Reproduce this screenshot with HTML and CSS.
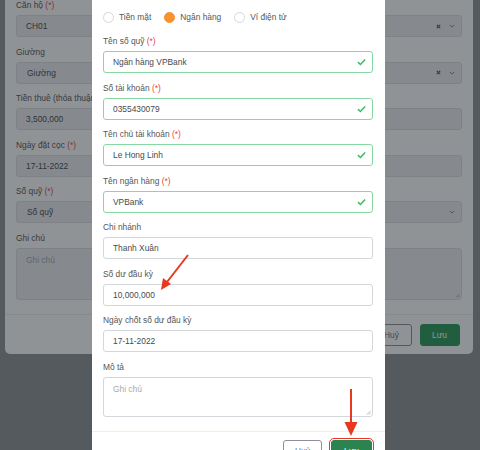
FILE: index.html
```html
<!DOCTYPE html>
<html lang="vi">
<head>
<meta charset="utf-8">
<title>Sổ quỹ</title>
<link rel="stylesheet" href="styles.css">
</head>
<body>
<div class="stage">
  <div class="modal modal-back">
    <div class="mbody">
      <div class="fg">
        <label class="lbl">Căn hộ <span class="req">(*)</span></label>
        <div class="ctl sel"><span class="val">CH01</span><span class="icons"><svg class="clr" viewBox="0 0 6 6"><path d="M1 1L5 5M5 1L1 5"/></svg><svg class="chev" viewBox="0 0 8 5"><path d="M1 1L4 4L7 1"/></svg></span></div>
      </div>
      <div class="fg">
        <label class="lbl">Giường</label>
        <div class="ctl sel"><span class="val ind">Giường</span><span class="icons"><svg class="clr" viewBox="0 0 6 6"><path d="M1 1L5 5M5 1L1 5"/></svg><svg class="chev" viewBox="0 0 8 5"><path d="M1 1L4 4L7 1"/></svg></span></div>
      </div>
      <div class="fg">
        <label class="lbl">Tiền thuê (thỏa thuận)</label>
        <div class="ctl">3,500,000</div>
      </div>
      <div class="fg">
        <label class="lbl">Ngày đặt cọc <span class="req">(*)</span></label>
        <div class="ctl">17-11-2022</div>
      </div>
      <div class="fg">
        <label class="lbl">Số quỹ <span class="req">(*)</span></label>
        <div class="ctl sel"><span class="val ind">Số quỹ</span><span class="icons"><svg class="chev" viewBox="0 0 8 5"><path d="M1 1L4 4L7 1"/></svg></span></div>
      </div>
      <div class="fg">
        <label class="lbl">Ghi chú</label>
        <div class="ctl area tall"><span class="ph">Ghi chú</span><svg class="grip" viewBox="0 0 6 6"><path d="M5.5 1L1 5.5M5.5 3.5L3.5 5.5"/></svg></div>
      </div>
    </div>
    <div class="mfoot">
      <button class="btn btn-out">Huỷ</button>
      <button class="btn btn-ok">Lưu</button>
    </div>
  </div>

  <div class="backdrop"></div>

  <div class="modal modal-front">
    <div class="mbody">
      <div class="radios">
        <span class="radio"><span class="dot"></span>Tiền mặt</span>
        <span class="radio"><span class="dot on"></span>Ngân hàng</span>
        <span class="radio"><span class="dot"></span>Ví điện tử</span>
      </div>
      <div class="fg">
        <label class="lbl">Tên số quỹ <span class="req">(*)</span></label>
        <div class="ctl ok">Ngân hàng VPBank<svg class="chk" viewBox="0 0 10 8"><path d="M1 4.2L3.8 6.8L9 1.2"/></svg></div>
      </div>
      <div class="fg">
        <label class="lbl">Số tài khoản <span class="req">(*)</span></label>
        <div class="ctl ok">0355430079<svg class="chk" viewBox="0 0 10 8"><path d="M1 4.2L3.8 6.8L9 1.2"/></svg></div>
      </div>
      <div class="fg">
        <label class="lbl">Tên chủ tài khoản <span class="req">(*)</span></label>
        <div class="ctl ok">Le Hong Linh<svg class="chk" viewBox="0 0 10 8"><path d="M1 4.2L3.8 6.8L9 1.2"/></svg></div>
      </div>
      <div class="fg">
        <label class="lbl">Tên ngân hàng <span class="req">(*)</span></label>
        <div class="ctl ok">VPBank<svg class="chk" viewBox="0 0 10 8"><path d="M1 4.2L3.8 6.8L9 1.2"/></svg></div>
      </div>
      <div class="fg">
        <label class="lbl">Chi nhánh</label>
        <div class="ctl">Thanh Xuân</div>
      </div>
      <div class="fg">
        <label class="lbl">Số dư đầu kỳ</label>
        <div class="ctl">10,000,000</div>
      </div>
      <div class="fg">
        <label class="lbl">Ngày chốt số dư đầu kỳ</label>
        <div class="ctl">17-11-2022</div>
      </div>
      <div class="fg">
        <label class="lbl">Mô tả</label>
        <div class="ctl area"><span class="ph">Ghi chú</span><svg class="grip" viewBox="0 0 6 6"><path d="M5.5 1L1 5.5M5.5 3.5L3.5 5.5"/></svg></div>
      </div>
    </div>
    <div class="mfoot">
      <button class="btn btn-out">Huỷ</button>
      <button class="btn btn-ok btn-mark">Lưu</button>
    </div>
  </div>

  <svg class="annot" viewBox="0 0 480 450" width="480" height="450">
    <line x1="188" y1="255" x2="167" y2="282"/>
    <polygon points="161,290 163,278 171,284"/>
    <line x1="351" y1="389" x2="351" y2="424"/>
    <polygon points="344.5,422 357.5,422 351,436"/>
  </svg>
</div>
</body>
</html>
```

FILE: styles.css
```css
* { box-sizing: border-box; }
html, body { margin: 0; padding: 0; }
body {
  background: #8f9295;
  font-family: "Liberation Sans", Arial, sans-serif;
  font-size: 8.4px;
  color: #495057;
}
.stage {
  position: relative;
  width: 480px;
  height: 450px;
  overflow: hidden;
}
.modal {
  background: #fff;
  border-radius: 5px;
}
.modal-back {
  margin: -12px 7px 0 5px;
}
.mbody {
  padding: 11px 11px 6px;
}
.fg {
  margin-bottom: 8.5px;
}
.lbl {
  display: block;
  line-height: 12px;
  margin-bottom: 4px;
  color: #555;
}
.req { color: #e8423a; }
.ctl {
  position: relative;
  height: 22px;
  border: 1px solid #d3d7db;
  border-radius: 3px;
  padding: 0 9px;
  display: flex;
  align-items: center;
  color: #464a4e;
  background: #fff;
}
.modal-back .ctl {
  background: #eceef0;
  border-color: #dcdfe2;
}
.val.ind { padding-left: 1px; }
.sel { justify-content: space-between; }
.icons {
  display: flex;
  align-items: center;
  gap: 8px;
  margin-right: -3px;
}
.clr { width: 5px; height: 5px; fill: none; stroke: #555; stroke-width: 1.4; }
.chev { width: 6px; height: 4px; fill: none; stroke: #777; stroke-width: 1.2; }
.area {
  height: 40px;
  align-items: flex-start;
  padding-top: 6px;
}
.area.tall { height: 52px; }
.ph { color: #a6a9ad; }
.grip {
  position: absolute;
  right: 1px;
  bottom: 1px;
  width: 5px;
  height: 5px;
  fill: none;
  stroke: #999;
  stroke-width: 0.8;
}
.mfoot {
  border-top: 1px solid #eceef0;
  padding: 9px 13.5px 8px;
  display: flex;
  justify-content: flex-end;
  gap: 8px;
}
.btn {
  height: 22px;
  width: 40px;
  border-radius: 3px;
  font-family: inherit;
  font-size: 8.4px;
  padding: 0;
}
.btn-out {
  background: #fff;
  border: 1px solid #8a9096;
  color: #6c757d;
}
.btn-ok {
  background: #2a9a58;
  border: 1px solid #2a9a58;
  color: #fff;
}
.backdrop {
  position: absolute;
  inset: 0;
  background: rgba(22, 29, 35, 0.48);
}
.modal-front {
  position: absolute;
  left: 92px;
  top: -10px;
  width: 293px;
  height: 480px;
}
.modal-front .mbody {
  padding: 21px 12px 6px 11px;
}
.modal-front .mfoot {
  padding: 8px 13px 8px;
  gap: 9px;
}
.modal-front .btn-out { width: 39px; }
.modal-front .btn-ok {
  width: 41px;
  background: #2b8450;
  border-color: #2b8450;
}
.btn-mark {
  outline: 1.5px solid #e5382a;
  outline-offset: 1px;
}
.radios {
  display: flex;
  align-items: center;
  height: 12px;
  margin-bottom: 12px;
  color: #555;
}
.radio {
  display: flex;
  align-items: center;
  margin-right: 13px;
}
.dot {
  width: 11px;
  height: 11px;
  border-radius: 50%;
  border: 1px solid #d5d8db;
  background: #fff;
  margin-right: 5px;
}
.dot.on {
  background: #f7922f;
  border-color: #f7922f;
}
.ok {
  border-color: #87d9a3;
  justify-content: space-between;
}
.chk {
  width: 9px;
  height: 8px;
  fill: none;
  stroke: #3cba64;
  stroke-width: 1.7;
  margin-right: -3px;
}
.annot {
  position: absolute;
  left: 0;
  top: 0;
  pointer-events: none;
}
.annot line {
  stroke: #e8391e;
  stroke-width: 2;
}
.annot polygon {
  fill: #e8391e;
}
```
